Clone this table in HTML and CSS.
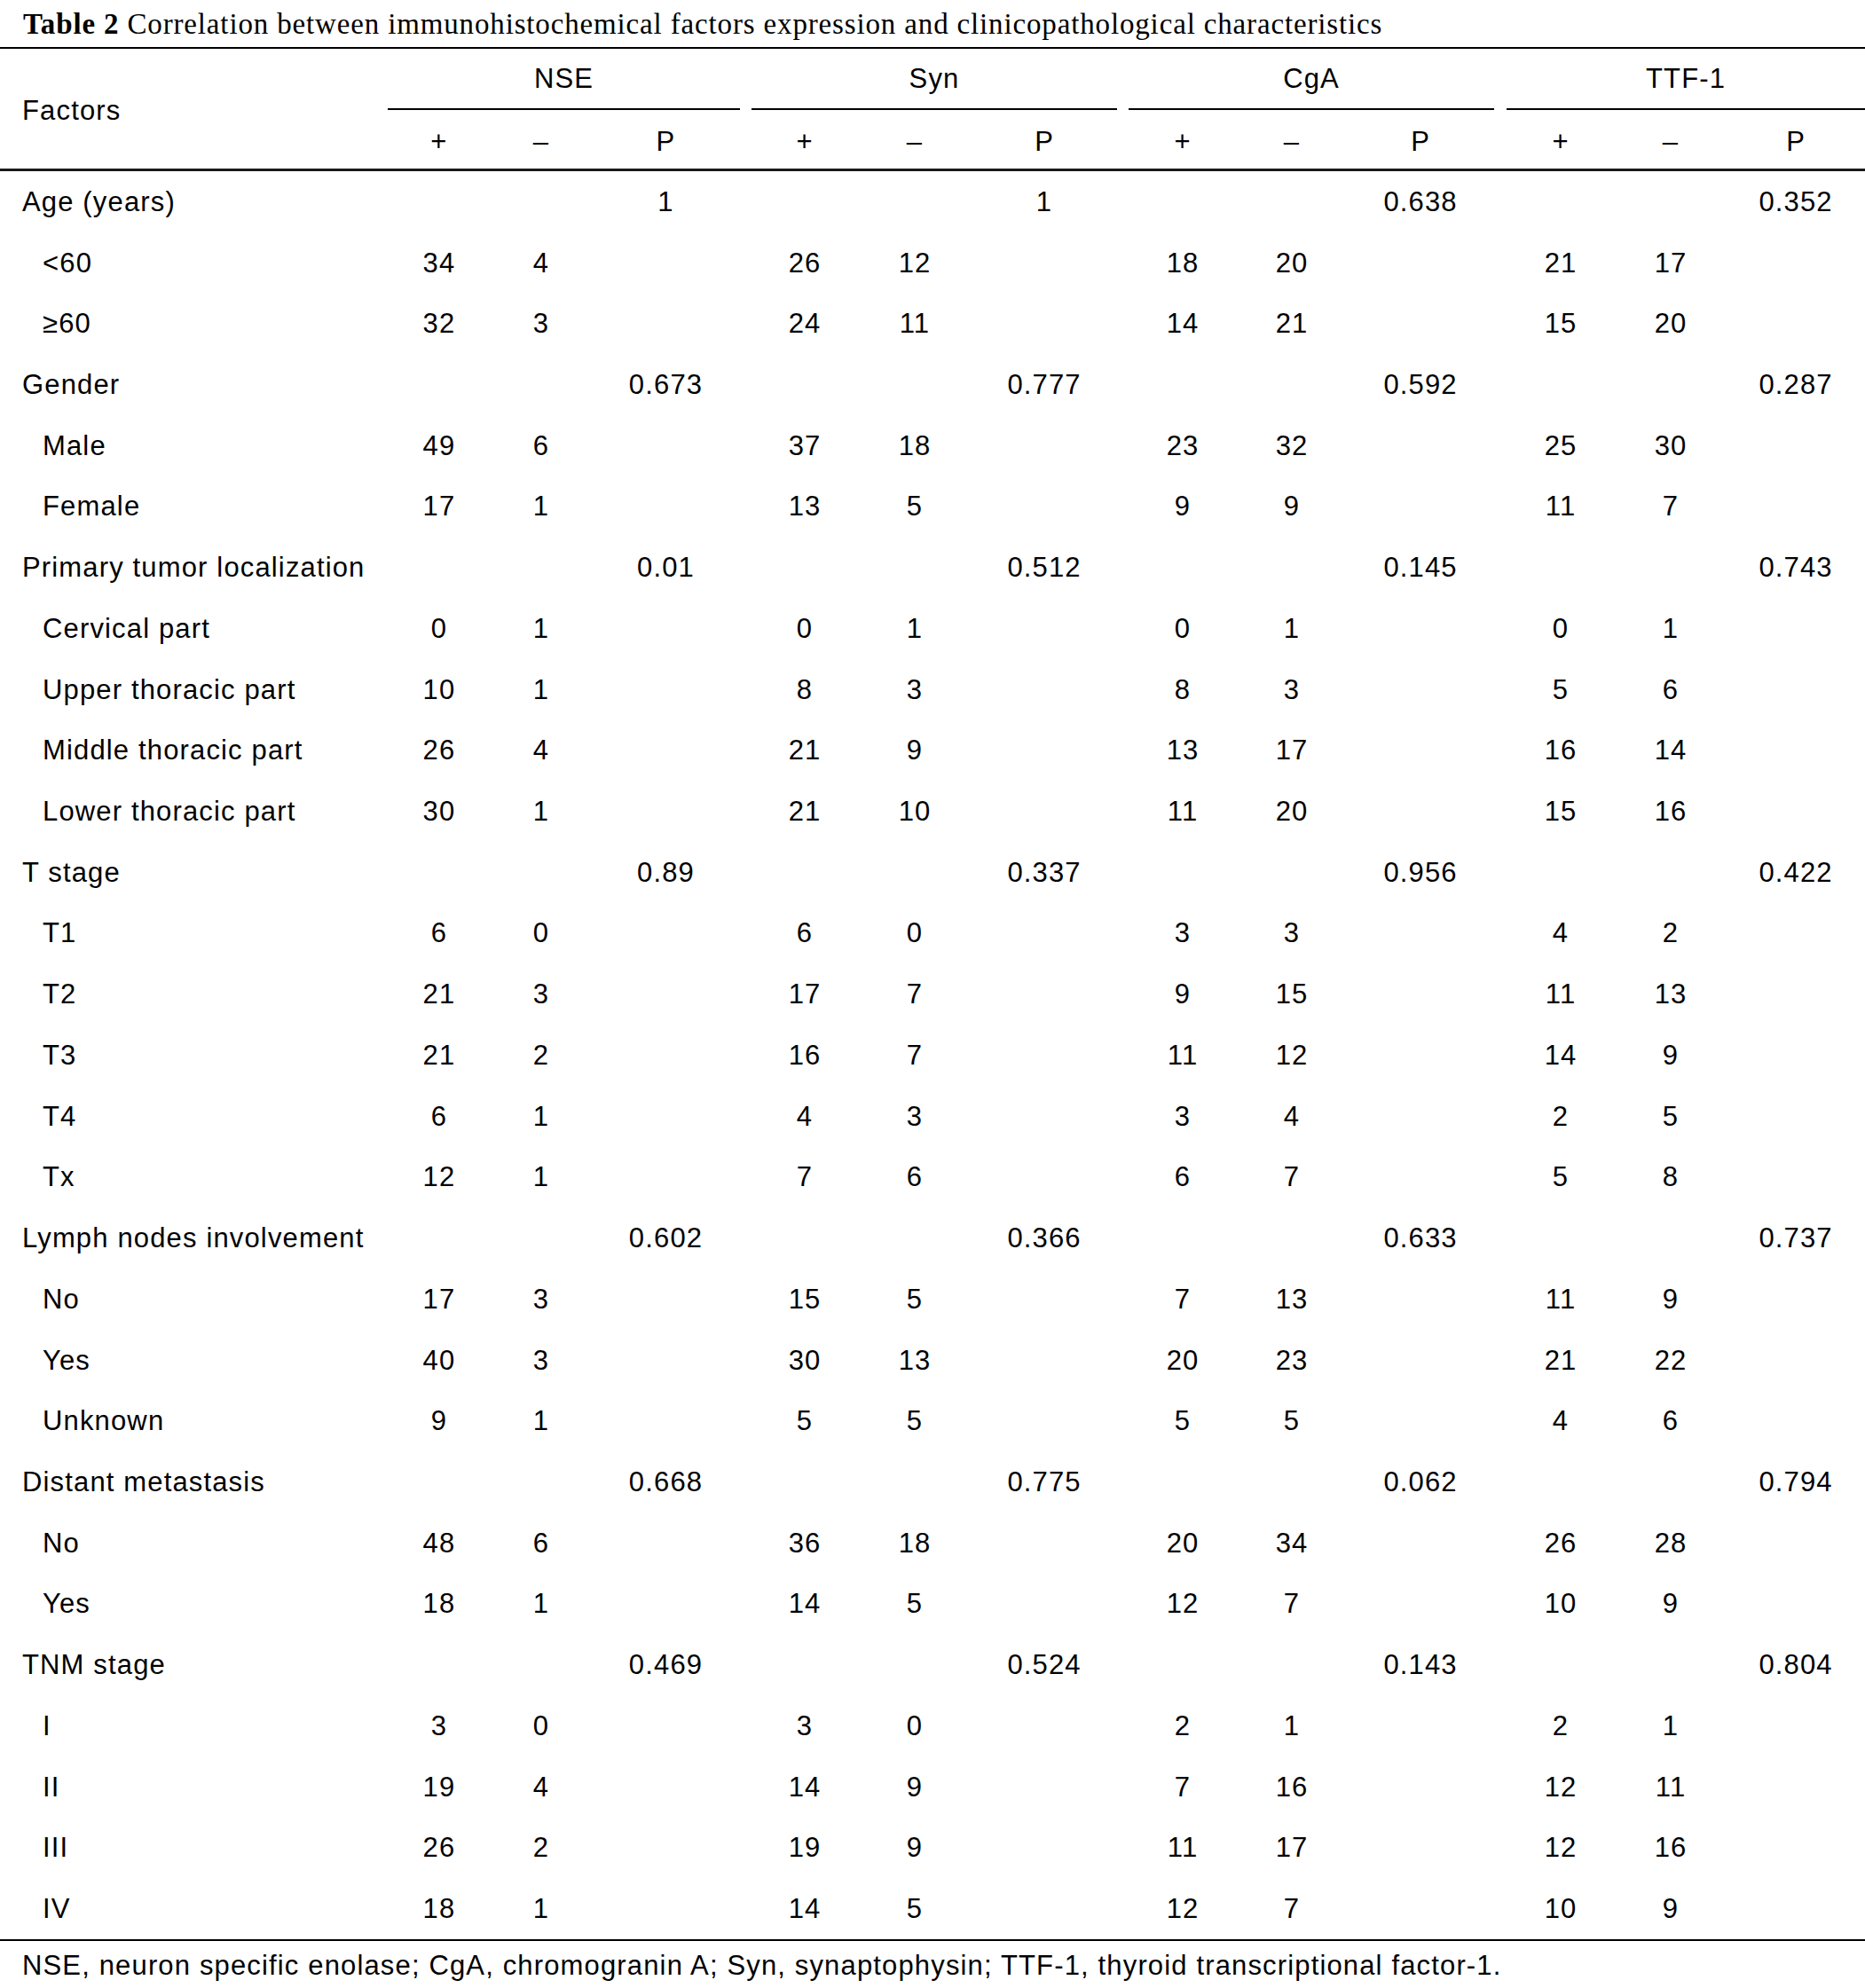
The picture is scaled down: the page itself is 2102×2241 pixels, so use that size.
FILE: index.html
```html
<!DOCTYPE html>
<html lang="en">
<head>
<meta charset="utf-8">
<title>Table 2</title>
<link rel="stylesheet" href="styles.css">
</head>
<body>
<div class="title"><b>Table 2</b> Correlation between immunohistochemical factors expression and clinicopathological characteristics</div>
<table class="tbl">
<colgroup>
<col class="c-f"><col class="c-a"><col class="c-b"><col class="c-p"><col class="c-g">
<col class="c-a2"><col class="c-b2"><col class="c-p2"><col class="c-g">
<col class="c-a3"><col class="c-b3"><col class="c-p3"><col class="c-g4">
<col class="c-a3"><col class="c-b4"><col class="c-p4">
</colgroup>
<thead>
<tr class="h1">
<th class="f fh" rowspan="2">Factors</th>
<th class="grp" colspan="3">NSE</th><th class="gap"></th>
<th class="grp" colspan="3">Syn</th><th class="gap"></th>
<th class="grp" colspan="3">CgA</th><th class="gap"></th>
<th class="grp" colspan="3">TTF-1</th>
</tr>
<tr class="h2">
<th>+</th><th>–</th><th>P</th><th></th>
<th>+</th><th>–</th><th>P</th><th></th>
<th>+</th><th>–</th><th>P</th><th></th>
<th>+</th><th>–</th><th>P</th>
</tr>
</thead>
<tbody>
<tr><td class="f">Age (years)</td><td></td><td></td><td>1</td><td></td><td></td><td></td><td>1</td><td></td><td></td><td></td><td>0.638</td><td></td><td></td><td></td><td>0.352</td></tr>
<tr><td class="f s">&lt;60</td><td>34</td><td>4</td><td></td><td></td><td>26</td><td>12</td><td></td><td></td><td>18</td><td>20</td><td></td><td></td><td>21</td><td>17</td><td></td></tr>
<tr><td class="f s">≥60</td><td>32</td><td>3</td><td></td><td></td><td>24</td><td>11</td><td></td><td></td><td>14</td><td>21</td><td></td><td></td><td>15</td><td>20</td><td></td></tr>
<tr><td class="f">Gender</td><td></td><td></td><td>0.673</td><td></td><td></td><td></td><td>0.777</td><td></td><td></td><td></td><td>0.592</td><td></td><td></td><td></td><td>0.287</td></tr>
<tr><td class="f s">Male</td><td>49</td><td>6</td><td></td><td></td><td>37</td><td>18</td><td></td><td></td><td>23</td><td>32</td><td></td><td></td><td>25</td><td>30</td><td></td></tr>
<tr><td class="f s">Female</td><td>17</td><td>1</td><td></td><td></td><td>13</td><td>5</td><td></td><td></td><td>9</td><td>9</td><td></td><td></td><td>11</td><td>7</td><td></td></tr>
<tr><td class="f">Primary tumor localization</td><td></td><td></td><td>0.01</td><td></td><td></td><td></td><td>0.512</td><td></td><td></td><td></td><td>0.145</td><td></td><td></td><td></td><td>0.743</td></tr>
<tr><td class="f s">Cervical part</td><td>0</td><td>1</td><td></td><td></td><td>0</td><td>1</td><td></td><td></td><td>0</td><td>1</td><td></td><td></td><td>0</td><td>1</td><td></td></tr>
<tr><td class="f s">Upper thoracic part</td><td>10</td><td>1</td><td></td><td></td><td>8</td><td>3</td><td></td><td></td><td>8</td><td>3</td><td></td><td></td><td>5</td><td>6</td><td></td></tr>
<tr><td class="f s">Middle thoracic part</td><td>26</td><td>4</td><td></td><td></td><td>21</td><td>9</td><td></td><td></td><td>13</td><td>17</td><td></td><td></td><td>16</td><td>14</td><td></td></tr>
<tr><td class="f s">Lower thoracic part</td><td>30</td><td>1</td><td></td><td></td><td>21</td><td>10</td><td></td><td></td><td>11</td><td>20</td><td></td><td></td><td>15</td><td>16</td><td></td></tr>
<tr><td class="f">T stage</td><td></td><td></td><td>0.89</td><td></td><td></td><td></td><td>0.337</td><td></td><td></td><td></td><td>0.956</td><td></td><td></td><td></td><td>0.422</td></tr>
<tr><td class="f s">T1</td><td>6</td><td>0</td><td></td><td></td><td>6</td><td>0</td><td></td><td></td><td>3</td><td>3</td><td></td><td></td><td>4</td><td>2</td><td></td></tr>
<tr><td class="f s">T2</td><td>21</td><td>3</td><td></td><td></td><td>17</td><td>7</td><td></td><td></td><td>9</td><td>15</td><td></td><td></td><td>11</td><td>13</td><td></td></tr>
<tr><td class="f s">T3</td><td>21</td><td>2</td><td></td><td></td><td>16</td><td>7</td><td></td><td></td><td>11</td><td>12</td><td></td><td></td><td>14</td><td>9</td><td></td></tr>
<tr><td class="f s">T4</td><td>6</td><td>1</td><td></td><td></td><td>4</td><td>3</td><td></td><td></td><td>3</td><td>4</td><td></td><td></td><td>2</td><td>5</td><td></td></tr>
<tr><td class="f s">Tx</td><td>12</td><td>1</td><td></td><td></td><td>7</td><td>6</td><td></td><td></td><td>6</td><td>7</td><td></td><td></td><td>5</td><td>8</td><td></td></tr>
<tr><td class="f">Lymph nodes involvement</td><td></td><td></td><td>0.602</td><td></td><td></td><td></td><td>0.366</td><td></td><td></td><td></td><td>0.633</td><td></td><td></td><td></td><td>0.737</td></tr>
<tr><td class="f s">No</td><td>17</td><td>3</td><td></td><td></td><td>15</td><td>5</td><td></td><td></td><td>7</td><td>13</td><td></td><td></td><td>11</td><td>9</td><td></td></tr>
<tr><td class="f s">Yes</td><td>40</td><td>3</td><td></td><td></td><td>30</td><td>13</td><td></td><td></td><td>20</td><td>23</td><td></td><td></td><td>21</td><td>22</td><td></td></tr>
<tr><td class="f s">Unknown</td><td>9</td><td>1</td><td></td><td></td><td>5</td><td>5</td><td></td><td></td><td>5</td><td>5</td><td></td><td></td><td>4</td><td>6</td><td></td></tr>
<tr><td class="f">Distant metastasis</td><td></td><td></td><td>0.668</td><td></td><td></td><td></td><td>0.775</td><td></td><td></td><td></td><td>0.062</td><td></td><td></td><td></td><td>0.794</td></tr>
<tr><td class="f s">No</td><td>48</td><td>6</td><td></td><td></td><td>36</td><td>18</td><td></td><td></td><td>20</td><td>34</td><td></td><td></td><td>26</td><td>28</td><td></td></tr>
<tr><td class="f s">Yes</td><td>18</td><td>1</td><td></td><td></td><td>14</td><td>5</td><td></td><td></td><td>12</td><td>7</td><td></td><td></td><td>10</td><td>9</td><td></td></tr>
<tr><td class="f">TNM stage</td><td></td><td></td><td>0.469</td><td></td><td></td><td></td><td>0.524</td><td></td><td></td><td></td><td>0.143</td><td></td><td></td><td></td><td>0.804</td></tr>
<tr><td class="f s">I</td><td>3</td><td>0</td><td></td><td></td><td>3</td><td>0</td><td></td><td></td><td>2</td><td>1</td><td></td><td></td><td>2</td><td>1</td><td></td></tr>
<tr><td class="f s">II</td><td>19</td><td>4</td><td></td><td></td><td>14</td><td>9</td><td></td><td></td><td>7</td><td>16</td><td></td><td></td><td>12</td><td>11</td><td></td></tr>
<tr><td class="f s">III</td><td>26</td><td>2</td><td></td><td></td><td>19</td><td>9</td><td></td><td></td><td>11</td><td>17</td><td></td><td></td><td>12</td><td>16</td><td></td></tr>
<tr><td class="f s">IV</td><td>18</td><td>1</td><td></td><td></td><td>14</td><td>5</td><td></td><td></td><td>12</td><td>7</td><td></td><td></td><td>10</td><td>9</td><td></td></tr>
</tbody>
</table>
<div class="note">NSE, neuron specific enolase; CgA, chromogranin A; Syn, synaptophysin; TTF-1, thyroid transcriptional factor-1.</div>
</body>
</html>
```
FILE: styles.css
```css
html, body {
  margin: 0;
  padding: 0;
  background: #fff;
  color: #000;
}
body {
  width: 2102px;
}
.title {
  font-family: "Liberation Serif", "Times New Roman", serif;
  font-size: 33px;
  letter-spacing: 0.85px;
  line-height: 44px;
  height: 44px;
  padding: 5px 0 4px 26px;
  white-space: nowrap;
}
.title b {
  font-weight: bold;
}
.tbl {
  width: 2102px;
  table-layout: fixed;
  border-collapse: separate;
  border-spacing: 0;
  border-top: 2px solid #000;
  border-bottom: 2px solid #000;
  font-family: "Liberation Sans", Arial, sans-serif;
  font-size: 31px;
  letter-spacing: 1.15px;
}
.c-f { width: 437px; }
.c-a { width: 116px; }
.c-b { width: 114px; }
.c-p { width: 167px; }
.c-g { width: 13px; }
.c-g4 { width: 14px; }
.c-a2 { width: 120px; }
.c-b2 { width: 128px; }
.c-p2 { width: 164px; }
.c-a3 { width: 122px; }
.c-b3 { width: 124px; }
.c-p3 { width: 166px; }
.c-b4 { width: 126px; }
.c-p4 { width: 156px; }
.tbl th, .tbl td {
  padding: 0;
  text-align: center;
  vertical-align: middle;
  font-weight: normal;
  line-height: 36px;
  white-space: nowrap;
}
.tbl td {
  padding-top: 1px;
}
.tbl .f {
  text-align: left;
  padding-left: 25px;
}
.tbl .f.s {
  padding-left: 48px;
}
.tbl .fh {
  padding-top: 5px;
}
.h1 {
  height: 69px;
}
.h1 .grp {
  border-bottom: 2px solid #000;
}
.h2 {
  height: 69px;
}
.h2 th {
  padding-top: 6px;
}
.h2 th, .tbl .fh {
  border-bottom: 3px solid #1a1a1a;
}
.tbl tbody tr {
  height: 68.72px;
}
.note {
  font-family: "Liberation Sans", Arial, sans-serif;
  font-size: 31px;
  letter-spacing: 1.15px;
  line-height: 36px;
  padding: 10px 0 0 25px;
  white-space: nowrap;
}
```
